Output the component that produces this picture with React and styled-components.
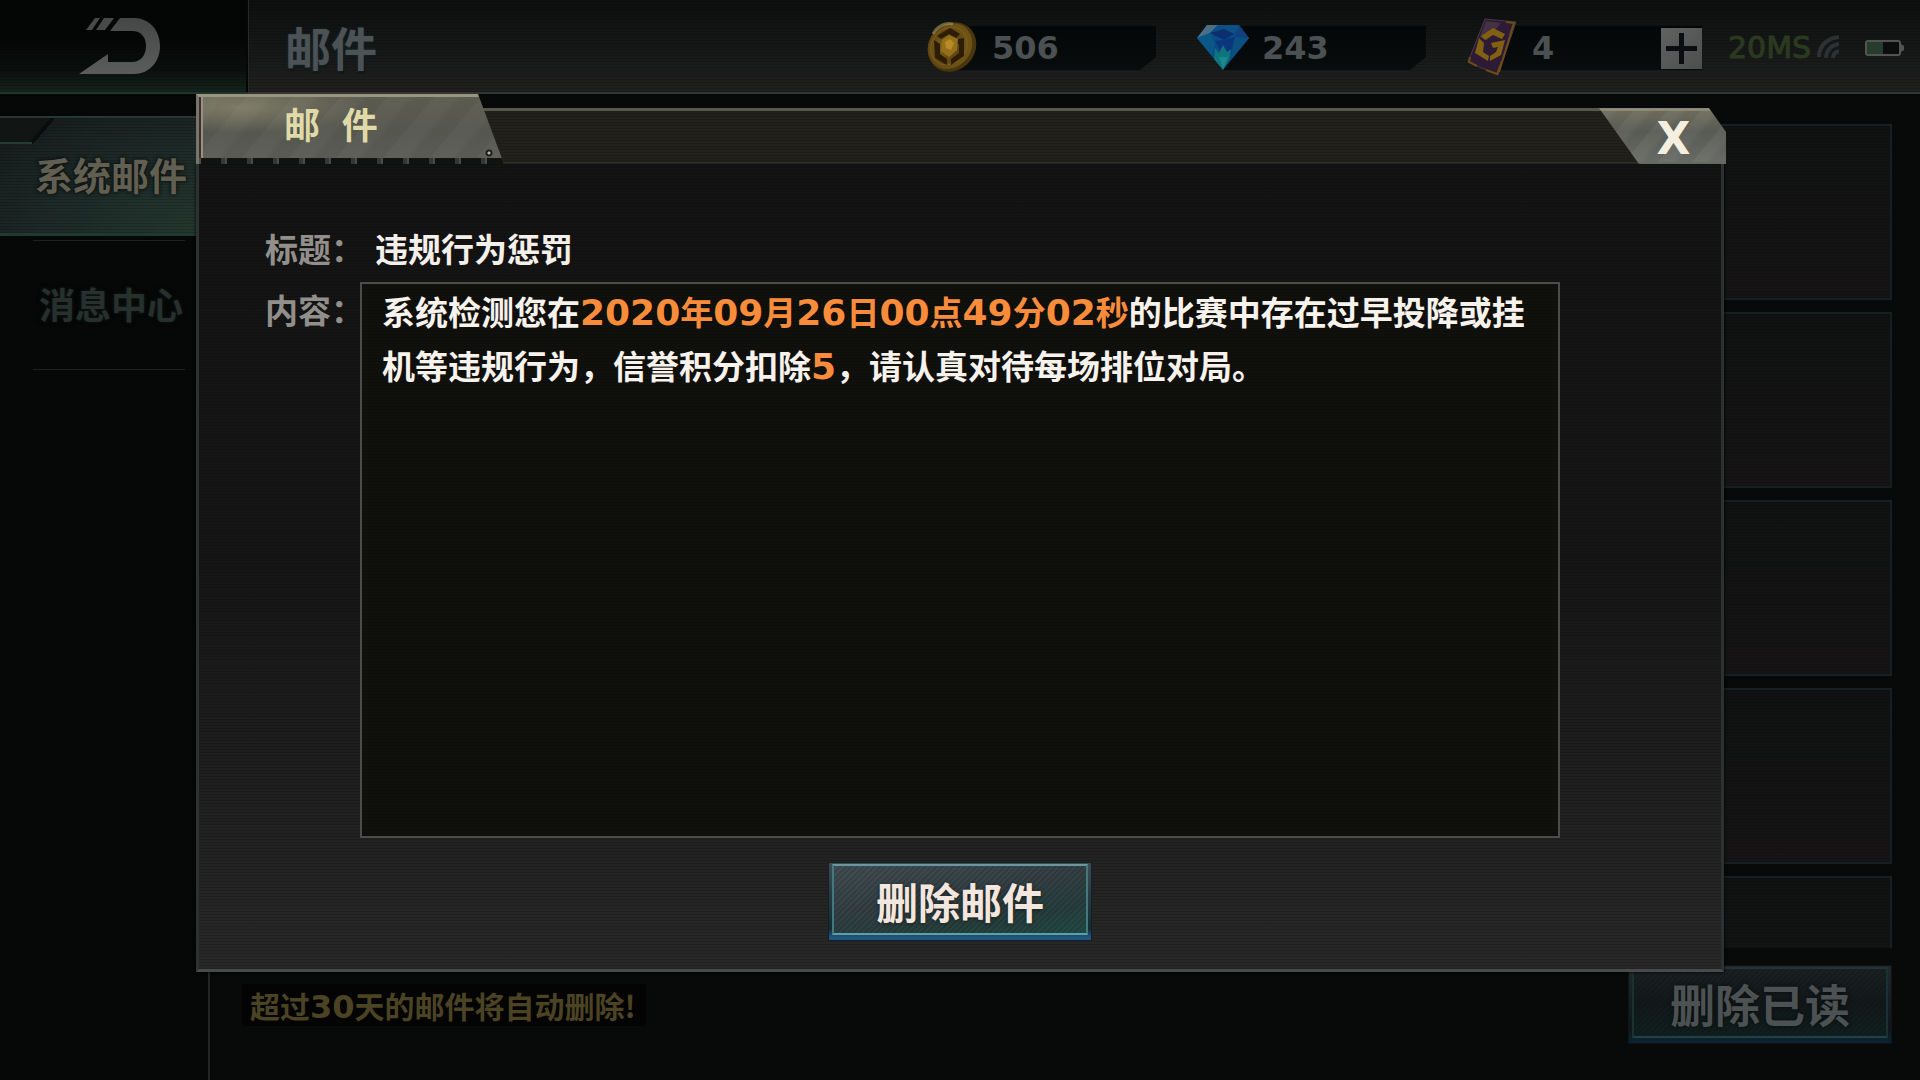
import React from "react";
import styled, { createGlobalStyle } from "styled-components";

const GlobalStyle = createGlobalStyle`
  *, *::before, *::after { box-sizing: border-box; }
  body { margin: 0; background: #070908; }
  h1, h2, p, ul, dl, dd, dt { margin: 0; padding: 0; font-weight: inherit; }
  ul { list-style: none; }
  button {
    border: 0;
    padding: 0;
    background: none;
    color: inherit;
    font: inherit;
    cursor: pointer;
  }
`;

const cjk = `"Noto Sans CJK SC", sans-serif`;
const digits = `"DejaVu Sans", sans-serif`;
const mesh = `repeating-linear-gradient(0deg, rgba(0, 0, 0, 0.16) 0 1px, transparent 1px 3px)`;

const Page = styled.div`
  position: relative;
  display: flex;
  flex-direction: column;
  min-height: 100vh;
  font-family: ${cjk};
  font-weight: 700;
  background: ${mesh}, #080a09;
  overflow: hidden;
`;

/* ---------- top bar ---------- */

const TopBar = styled.header`
  display: flex;
  align-items: stretch;
  height: 94px;
  border-bottom: 2px solid #323534;
  background: ${mesh}, linear-gradient(#0c0f0e, #151817 50%, #20201f);
`;

const BackButton = styled.button`
  display: flex;
  align-items: center;
  justify-content: center;
  width: 248px;
  padding-right: 6px;
  border-right: 2px solid #050606;
  background: ${mesh}, linear-gradient(#040605 40%, #0a0f0d 75%, #14241c);
  box-shadow: 0 2px 0 #1f352b;
`;

const PageTitle = styled.h1`
  flex: 1;
  padding-left: 36px;
  font-size: 46px;
  line-height: 92px;
  color: #4d5254;
  text-shadow: 0 0 3px #16282f, 1px 2px 1px #0c181c;
  border-left: 1px solid #262928;
`;

const Wallet = styled.ul`
  display: flex;
  align-items: center;
  gap: 40px;
  padding: 4px 26px 0 0;
`;

const Balance = styled.li`
  display: flex;
  align-items: center;
  width: ${(p) => (p.$wide ? "236px" : "230px")};
  height: 58px;
  background: linear-gradient(#040708, #090c0c) 26px 7px / 100% 44px no-repeat;
  clip-path: ${(p) =>
    p.$wide ? "none" : "polygon(0 0, 100% 0, 100% 38px, calc(100% - 16px) 51px, 60px 51px, 60px 100%, 0 100%)"};
`;

const BalanceIcon = styled.span`
  display: flex;
  align-items: center;
  width: 66px;
  padding-bottom: 3px;
`;

const Amount = styled.span`
  flex: 1;
  font-family: ${digits};
  font-size: 32px;
  line-height: 44px;
  color: #4b5052;
`;

const AddButton = styled.button`
  display: flex;
  align-items: center;
  justify-content: center;
  width: 41px;
  height: 41px;
  background: linear-gradient(135deg, #606262, #4d4f4f);
`;

const Status = styled.div`
  display: flex;
  align-items: center;
  padding: 4px 16px 0 0;
  color: #2b3a1f;
`;

const Ping = styled.span`
  width: 89px;
  font-family: ${digits};
  font-weight: 400;
  font-size: 30px;
  line-height: 44px;
  white-space: nowrap;
  -webkit-text-stroke: 1px #2b3a1f;
`;

const BatterySlot = styled.span`
  display: flex;
  padding-left: 26px;
`;

/* ---------- body behind the dialog ---------- */

const Body = styled.div`
  display: flex;
  flex: 1;
`;

const Sidebar = styled.nav`
  display: flex;
  flex-direction: column;
  width: 210px;
  padding-top: 22px;
  border-right: 2px solid #232626;
  background: ${mesh}, #060808;
`;

const SideTab = styled.button`
  height: 120px;
  padding: 0 0 4px ${(p) => (p.$active ? "35px" : "39px")};
  text-align: left;
  white-space: nowrap;
  font-size: ${(p) => (p.$active ? "38px" : "36px")};
  color: ${(p) => (p.$active ? "#615f52" : "#26302c")};
  text-shadow: 0 0 3px #0e1110, 0 0 4px #0e1110;
  border-top: ${(p) => (p.$active ? "2px solid #283733" : "0")};
  border-bottom: ${(p) => (p.$active ? "3px solid #213a31" : "0")};
  background: ${(p) =>
    p.$active
      ? `linear-gradient(#243a33, #243a33) 0 24px / 32px 2px no-repeat,
         linear-gradient(131deg, #111514 0 38px, #0a0d0c 38px 42px, transparent 42px) 0 0 / 60px 26px no-repeat,
         ${mesh}, radial-gradient(ellipse at 100% 100%, #24382f, #1c2826 60%, #141a19)`
      : "none"};
`;

const SideRule = styled.hr`
  width: 152px;
  margin: 4px 0 4px 33px;
  border: 0;
  border-top: 1px solid #1c201f;
`;

const Content = styled.main`
  display: flex;
  flex: 1;
  flex-direction: column;
  padding: 30px 28px 36px 32px;
`;

const MailList = styled.ul`
  display: grid;
  grid-auto-rows: 176px;
  gap: 12px;
  height: 824px;
  overflow: hidden;
`;

const MailSlot = styled.li`
  border: 2px solid #142022;
  background: ${mesh}, linear-gradient(#101212, #161415);
`;

const Footer = styled.footer`
  display: flex;
  align-items: flex-start;
  justify-content: space-between;
  padding-top: 17px;
`;

const Notice = styled.p`
  margin-top: 19px;
  padding: 0 10px 0 8px;
  font-size: 30px;
  line-height: 42px;
  color: #4b4324;
  background: #030403;
`;

const ActionButton = styled.button`
  display: flex;
  align-items: center;
  justify-content: center;
  width: 264px;
  height: 79px;
  padding: 1px 3px 5px 3px;
  border: 1px solid ${(p) => (p.$dim ? "#0b151a" : "#0e2028")};
  background: ${(p) =>
    p.$dim
      ? "linear-gradient(#20282b, #0e1619 80%, #0e2430)"
      : "linear-gradient(#3c4c52, #152a32 85%, #23587e 97%)"};
`;

const ActionFace = styled.span`
  display: flex;
  align-items: center;
  justify-content: center;
  width: 100%;
  height: 100%;
  padding-top: 2px;
  border: 2px solid ${(p) => (p.$dim ? "#1b3033" : "#43787d")};
  border-top-color: ${(p) => (p.$dim ? "#293336" : "#6b98a0")};
  border-bottom-color: ${(p) => (p.$dim ? "#1d4248" : "#56a3ab")};
  font-size: ${(p) => (p.$dim ? "45px" : "42px")};
  line-height: 60px;
  white-space: nowrap;
  color: ${(p) => (p.$dim ? "#4c5153" : "#f3e6df")};
  text-shadow: ${(p) => (p.$dim ? "0 0 4px #080a0a" : "0 1px 4px rgba(0, 0, 0, 0.5)")};
  background: repeating-linear-gradient(135deg, rgba(0, 0, 0, 0.12) 0 2px, transparent 2px 4px),
    ${(p) =>
      p.$dim
        ? "linear-gradient(#1b2023, #13191b 50%, #10201e)"
        : "linear-gradient(170deg, #424e54, #344044 45%, #27403e 75%, #234a45)"};
`;

/* ---------- dialog ---------- */

const Overlay = styled.div`
  position: absolute;
  inset: 0;
  display: flex;
  padding: 94px 194px 108px 196px;
`;

const Dialog = styled.section`
  display: flex;
  flex: 1;
  flex-direction: column;
`;

const DialogHeader = styled.div`
  display: flex;
  align-items: flex-end;
  height: 70px;
`;

const DialogTab = styled.h2`
  position: relative;
  z-index: 1;
  width: 308px;
  height: 70px;
  padding-left: 85px;
  font-family: "DejaVu Sans Mono", ${cjk};
  font-size: 36px;
  line-height: 60px;
  color: #dfdaa8;
  border-top: 3px solid #98967f;
  border-left: 3px solid #77756a;
  clip-path: polygon(0 0, 282px 0, 100% 100%, 0 100%);
  background:
    radial-gradient(circle at 290px 56px, #b4b3a0 0 1px, #1c1d1a 2px 3px, transparent 4px),
    repeating-linear-gradient(90deg, #4a4c46 0 2px, #101311 2px 22px, #343832 22px 26px) 0 100% / 100% 6px no-repeat,
    linear-gradient(90deg, #3a302d 0 2px, #9b8f85 2px 4px, transparent 4px),
    repeating-linear-gradient(130deg, rgba(255, 255, 240, 0.03) 0 16px, transparent 22px 36px),
    radial-gradient(ellipse at 40px 10px, #7d7b66, transparent 120px),
    linear-gradient(#5c5b50, #55564e 50%, #5b5c55);
`;

const DialogBar = styled.div`
  flex: 1;
  height: 56px;
  margin: 0 -60px 0 -40px;
  border-top: 3px solid #59574b;
  border-bottom: 2px solid #3b3d36;
  background: ${mesh}, #23211b;
`;

const CloseButton = styled.button`
  position: relative;
  display: flex;
  align-items: center;
  justify-content: center;
  width: 127px;
  height: 56px;
  padding: 4px 0 0 22px;
  font-family: ${digits};
  font-size: 44px;
  line-height: 48px;
  color: #f4efdf;
  border-top: 3px solid #8b8a76;
  border-bottom: 2px solid #666a5e;
  clip-path: polygon(0 0, 110px 0, 100% 24px, 100% 100%, 40px 100%);
  background:
    repeating-linear-gradient(130deg, rgba(255, 255, 240, 0.05) 0 10px, transparent 16px 26px),
    linear-gradient(#6c6b5c, #585a54 40%, #676a65);
`;

const DialogBody = styled.div`
  display: flex;
  flex: 1;
  flex-direction: column;
  align-items: center;
  margin-right: 2px;
  padding: 57px 161px 28px 66px;
  border: 3px solid #2e3132;
  border-top: 0;
  border-bottom-color: #474b4a;
  background: ${mesh}, linear-gradient(#131314, #161617 50%, #202021 80%, #282829);
  box-shadow: 0 0 3px #000;
`;

const Fields = styled.dl`
  display: grid;
  grid-template-columns: 95px 1fr;
  grid-template-rows: 61px 1fr;
  flex: 1;
  align-self: stretch;
  font-size: 33px;
  line-height: 54px;
`;

const Label = styled.dt`
  white-space: nowrap;
  color: #928f8b;
`;

const Subject = styled.dd`
  padding-left: 15px;
  color: #f5efea;
`;

const Message = styled.dd`
  padding: 0 20px;
  color: #f8f2ec;
  border: 2px solid #4c4c4a;
  background: ${mesh}, #10100d;
`;

const Accent = styled.em`
  font-style: normal;
  color: #f98c3a;
`;

const Num = styled.span`
  font-family: ${digits};
  font-size: ${(p) => (p.$small ? "32px" : "36px")};
  line-height: 1;
`;

const Actions = styled.div`
  display: flex;
  justify-content: center;
  width: 100%;
  padding-top: 24px;
  margin-left: 95px;
`;

/* ---------- drawings ---------- */

const BackIcon = () => (
  <svg width="82" height="58" viewBox="80 17 82 58" aria-hidden="true">
    <defs>
      <linearGradient id="back" x1="0" y1="0" x2="0" y2="1">
        <stop offset="0" stopColor="#454746" />
        <stop offset="1" stopColor="#5b5d5c" />
      </linearGradient>
    </defs>
    <path
      fill="url(#back)"
      d="M121 18h14c15 0 26 12 26 28s-11 28-26 28H80l29-20v8h24c9 0 14-7 14-16s-5-15-14-15h-22z"
    />
    <path fill="#484a49" d="M96 18h5l-8 12h-6zM105 18h10l-9 12h-9z" />
  </svg>
);

const CoinIcon = () => (
  <svg width="52" height="52" viewBox="0 0 52 52" aria-hidden="true">
    <defs>
      <radialGradient id="coin" cx="0.4" cy="0.4">
        <stop offset="0" stopColor="#80621a" />
        <stop offset="0.7" stopColor="#5f4612" />
        <stop offset="1" stopColor="#6d5216" />
      </radialGradient>
    </defs>
    <ellipse cx="26" cy="26" rx="26" ry="23" transform="rotate(-50 26 26)" fill="#4a360d" />
    <ellipse cx="24" cy="25" rx="24" ry="21" transform="rotate(-50 24 25)" fill="url(#coin)" />
    <ellipse cx="23" cy="25" rx="20" ry="17" transform="rotate(-50 23 25)" fill="none" stroke="#7c5f1c" />
    <path d="M11 15l13-8 10 6-4 4-7-4-8 5zM8 19l6 4v10l7 5v6L9 37zM38 17v18l-13 9v-6l8-6V23h-7v-4z" fill="#2e1d06" />
    <path d="M16 19l7-5 9 4-1 11-8 7-8-6z" fill="#94701c" />
    <path d="M19 21l5-3 4 4-3 7-5-2z" fill="#b98b26" />
    <path d="M7 13C11 5 19 1 27 3" stroke="#a39464" strokeWidth="3" fill="none" opacity="0.6" />
  </svg>
);

const DiamondIcon = () => (
  <svg width="54" height="46" viewBox="0 0 54 46" aria-hidden="true">
    <path d="M11 1h32l10 13-26 32L1 14z" fill="#0a4c83" />
    <path d="M11 1h11l-8 8zM1 14l10-13 3 8z" fill="#4c6f88" />
    <path d="M22 1h21l-5 9-10-5-14 4z" fill="#0d5088" />
    <path d="M43 1l10 13-14-1z" fill="#123f80" />
    <path d="M14 9l14-4 10 5-10 6z" fill="#0c2f70" />
    <path d="M1 14l13-5 5 10-3 13z" fill="#0b5888" />
    <path d="M19 17l9-1 11-3-4 14-8 5z" fill="#0b357c" />
    <path d="M39 13l14 1-18 22z" fill="#0a5080" />
    <path d="M19 24l4 5 4-8 4 7 4-3-2 11-6 10-9-11z" fill="#10747f" />
    <path d="M23 33h9l-5 12z" fill="#188a88" />
  </svg>
);

const CardIcon = () => (
  <svg width="52" height="58" viewBox="0 0 52 58" aria-hidden="true">
    <path d="M19 1l31 3-18 53L2 44z" fill="#2d1b35" stroke="#4a3a45" />
    <path d="M20 3l15 2-14 17-7-3z" fill="#54434f" opacity="0.6" />
    <path d="M40 4l8 1-4 12M4 39l-1 5 8 4M20 52l11 4 5-13M48 5L33 54" fill="none" stroke="#6d4a17" strokeWidth="2" />
    <path
      d="M15 18l12-8 12 6-3 5-9-4-8 5zM13 20l5 5-1 9 6 4-1 5-13-8zM25 25l14-3-4 15-11 6v-5l6-4 2-5-5 1z"
      fill="#826012"
    />
  </svg>
);

const PlusIcon = () => (
  <svg width="31" height="31" viewBox="0 0 31 31" aria-hidden="true">
    <path d="M13 0h5v13h13v5H18v13h-5V18H0v-5h13z" fill="#0a0e10" />
  </svg>
);

const SignalIcon = () => (
  <svg width="22" height="26" viewBox="0 0 22 26" aria-hidden="true">
    <g fill="none" stroke="#2b3231" strokeWidth="4">
      <path d="M2 22C2 11 10 3 22 2" />
      <path d="M9 23c0-7 5-13 13-14" />
      <path d="M16 23c0-4 2-6 6-7" />
    </g>
  </svg>
);

const BatteryIcon = () => (
  <svg width="39" height="16" viewBox="0 0 39 16" aria-hidden="true">
    <rect x="1" y="1" width="34" height="14" rx="2" fill="#0b0d0d" stroke="#505554" strokeWidth="2" />
    <rect x="2" y="2" width="16" height="12" fill="#263c2c" />
    <path d="M36 4l3 2v4l-3 2z" fill="#505554" />
  </svg>
);

export default function App() {
  return (
    <Page>
      <GlobalStyle />
      <TopBar>
        <BackButton aria-label="返回">
          <BackIcon />
        </BackButton>
        <PageTitle>邮件</PageTitle>
        <Wallet>
          <Balance>
            <BalanceIcon><CoinIcon /></BalanceIcon>
            <Amount>506</Amount>
          </Balance>
          <Balance>
            <BalanceIcon><DiamondIcon /></BalanceIcon>
            <Amount>243</Amount>
          </Balance>
          <Balance $wide>
            <BalanceIcon><CardIcon /></BalanceIcon>
            <Amount>4</Amount>
            <AddButton aria-label="添加">
              <PlusIcon />
            </AddButton>
          </Balance>
        </Wallet>
        <Status>
          <Ping>20MS</Ping>
          <SignalIcon />
          <BatterySlot><BatteryIcon /></BatterySlot>
        </Status>
      </TopBar>

      <Body>
        <Sidebar>
          <SideTab $active>系统邮件</SideTab>
          <SideRule />
          <SideTab>消息中心</SideTab>
          <SideRule />
        </Sidebar>
        <Content>
          <MailList>
            {[1, 2, 3, 4, 5].map((slot) => (
              <MailSlot key={slot} />
            ))}
          </MailList>
          <Footer>
            <Notice>
              超过<Num $small>30</Num>天的邮件将自动删除!
            </Notice>
            <ActionButton $dim>
              <ActionFace $dim>删除已读</ActionFace>
            </ActionButton>
          </Footer>
        </Content>
      </Body>

      <Overlay>
        <Dialog role="dialog" aria-labelledby="dialog-title">
          <DialogHeader>
            <DialogTab id="dialog-title">邮 件</DialogTab>
            <DialogBar />
            <CloseButton aria-label="关闭">X</CloseButton>
          </DialogHeader>
          <DialogBody>
            <Fields>
              <Label>标题：</Label>
              <Subject>违规行为惩罚</Subject>
              <Label>内容：</Label>
              <Message>
                系统检测您在
                <Accent>
                  <Num>2020</Num>年<Num>09</Num>月<Num>26</Num>日<Num>00</Num>点<Num>49</Num>分<Num>02</Num>秒
                </Accent>
                的比赛中存在过早投降或挂
                <wbr />
                机等违规行为，信誉积分扣除
                <Accent><Num>5</Num></Accent>
                ，请认真对待每场排位对局。
              </Message>
            </Fields>
            <Actions>
              <ActionButton>
                <ActionFace>删除邮件</ActionFace>
              </ActionButton>
            </Actions>
          </DialogBody>
        </Dialog>
      </Overlay>
    </Page>
  );
}
